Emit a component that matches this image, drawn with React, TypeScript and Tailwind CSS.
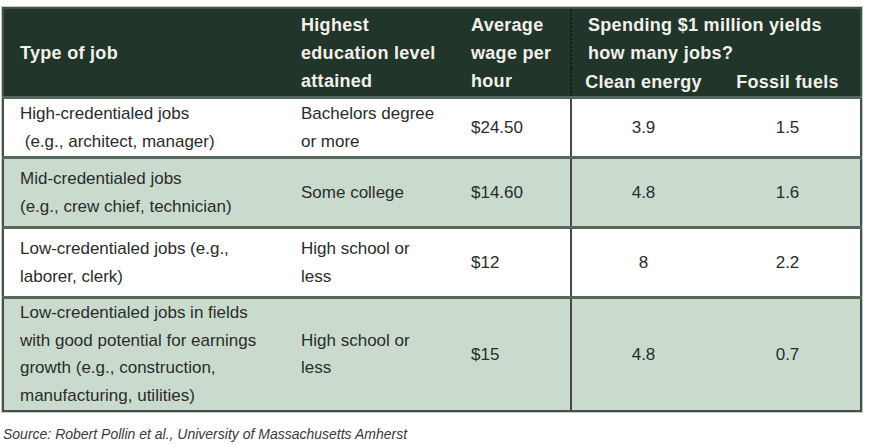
import React from "react";

const rows = [
  {
    job: ["High-credentialed jobs", "\u00a0(e.g., architect, manager)"],
    edu: ["Bachelors degree", "or more"],
    wage: "$24.50",
    clean: "3.9",
    fossil: "1.5",
    h: "h-[60px]",
    bg: "bg-white",
  },
  {
    job: ["Mid-credentialed jobs", "(e.g., crew chief, technician)"],
    edu: ["Some college"],
    wage: "$14.60",
    clean: "4.8",
    fossil: "1.6",
    h: "h-[70px]",
    bg: "bg-[#cadbce]",
  },
  {
    job: ["Low-credentialed jobs (e.g.,", "laborer, clerk)"],
    edu: ["High school or", "less"],
    wage: "$12",
    clean: "8",
    fossil: "2.2",
    h: "h-[70px]",
    bg: "bg-white",
  },
  {
    job: [
      "Low-credentialed jobs in fields",
      "with good potential for earnings",
      "growth (e.g., construction,",
      "manufacturing, utilities)",
    ],
    edu: ["High school or", "less"],
    wage: "$15",
    clean: "4.8",
    fossil: "0.7",
    h: "h-[113px]",
    bg: "bg-[#cadbce]",
  },
];

const Lines = ({ lines }: { lines: string[] }) => (
  <>
    {lines.map((l, i) => (
      <div key={i} className="whitespace-nowrap">
        {l}
      </div>
    ))}
  </>
);

export default function App() {
  return (
    <div className="w-[882px] h-[445px] bg-white font-['Liberation_Sans',Arial,sans-serif] text-[#2b2b2b]">
      <div className="pt-[7px] pl-[2px]">
        <table className="w-[858px] table-fixed border-collapse border-2 border-[#3e5246] shadow-[0_0_0_1px_#c8ccc9]">
          <colgroup>
            <col className="w-[288px]" />
            <col className="w-[170px]" />
            <col className="w-[110px]" />
            <col className="w-[144px]" />
            <col className="w-[146px]" />
          </colgroup>
          <thead className="bg-[#22352b] text-[#f2f1ea] text-[18px] font-bold tracking-[0.3px] leading-[28px]">
            <tr className="h-[60px]">
              <th rowSpan={2} className="text-left font-bold pl-[16px] align-middle">
                Type of job
              </th>
              <th rowSpan={2} className="text-left font-bold pl-[10px] align-middle">
                <Lines lines={["Highest", "education level", "attained"]} />
              </th>
              <th rowSpan={2} className="text-left font-bold pl-[10px] align-middle">
                <Lines lines={["Average", "wage per", "hour"]} />
              </th>
              <th colSpan={2} className="text-left font-bold pl-[16px] align-bottom pb-[1px] border-l-2 border-dotted border-[#111a15]">
                <Lines lines={["Spending $1 million yields", "how many jobs?"]} />
              </th>
            </tr>
            <tr className="h-[28px]">
              <th className="text-center font-bold align-top border-l-2 border-dotted border-[#111a15]">Clean energy</th>
              <th className="text-center font-bold align-top">Fossil fuels</th>
            </tr>
          </thead>
          <tbody className="text-[17px] leading-[27.5px]">
            {rows.map((r, i) => (
              <tr key={i} className={`${r.h} ${r.bg} border-t-[3px] border-[#56685c]`}>
                <td className="pl-[16px] align-middle">
                  <Lines lines={r.job} />
                </td>
                <td className="pl-[10px] align-middle">
                  <Lines lines={r.edu} />
                </td>
                <td className="pl-[10px] align-middle">{r.wage}</td>
                <td className="text-center align-middle border-l-2 border-[#454a46]">{r.clean}</td>
                <td className="text-center align-middle">{r.fossil}</td>
              </tr>
            ))}
          </tbody>
        </table>
      </div>
      <div className="pl-[3px] pt-[12px] text-[14px] italic text-[#3a3a3a]">
        Source: Robert Pollin et al., University of Massachusetts Amherst
      </div>
    </div>
  );
}
